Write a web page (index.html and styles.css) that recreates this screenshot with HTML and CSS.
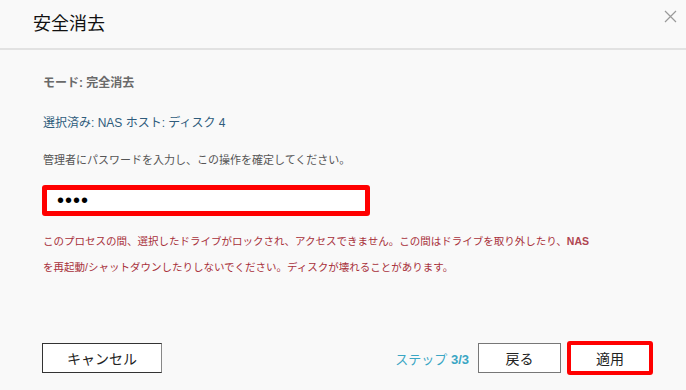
FILE: index.html
```html
<!DOCTYPE html>
<html>
<head>
    <meta charset="UTF-8">
    <title>安全消去</title>
    <link rel="stylesheet" href="styles.css">
</head>
<body>
    <div class="dialog">
        <div class="dialog-header">
            <h1>安全消去</h1>
            <button class="close-btn" aria-label="閉じる">
                <svg width="13" height="13" viewBox="0 0 13 13">
                    <path d="M1 1 L12 12 M12 1 L1 12" stroke="#9a9a9a" stroke-width="1.2" fill="none"/>
                </svg>
            </button>
        </div>

        <div class="dialog-body">
            <p class="mode-text">モード: 完全消去</p>
            <p class="selected-text">選択済み: NAS ホスト: ディスク 4</p>
            <p class="prompt-text">管理者にパスワードを入力し、この操作を確定してください。</p>
            <input type="password" class="password-input" value="abcd" autofocus>
            <p class="warning-text">このプロセスの間、選択したドライブがロックされ、アクセスできません。この間はドライブを取り外したり、<b>NAS</b><br>を再起動/シャットダウンしたりしないでください。ディスクが壊れることがあります。</p>
        </div>

        <div class="dialog-footer">
            <button class="btn cancel-btn">キャンセル</button>
            <div class="footer-right">
                <span class="step-text">ステップ <b>3/3</b></span>
                <button class="btn back-btn">戻る</button>
                <button class="btn apply-btn">適用</button>
            </div>
        </div>
    </div>
</body>
</html>
```

FILE: styles.css
```css
body {
    margin: 0;
    background-color: #f9f9f9;
    font-family: "Liberation Sans", "Noto Sans CJK JP", sans-serif;
}

.dialog {
    display: flex;
    flex-direction: column;
    width: 686px;
    height: 390px;
}

.dialog-header {
    display: flex;
    justify-content: space-between;
    align-items: flex-start;
    height: 48px;
    border-bottom: 2px solid #e2e2e2;
    padding: 0 9px 0 33px;
}

.dialog-header h1 {
    margin: 0;
    font-size: 18px;
    font-weight: normal;
    line-height: 48px;
    color: #111;
}

.close-btn {
    margin-top: 10px;
    padding: 0;
    border: none;
    background: none;
    cursor: pointer;
    line-height: 0;
}

.dialog-body {
    padding: 0 43px;
}

.dialog-body p {
    margin: 0;
    line-height: 20px;
}

.mode-text {
    margin-top: 23px !important;
    font-size: 12px;
    font-weight: bold;
    color: #6a6a6a;
}

.selected-text {
    margin-top: 20px !important;
    font-size: 12px;
    color: #2f5c7c;
}

.prompt-text {
    margin-top: 17px !important;
    font-size: 11px;
    color: #555;
}

.password-input {
    display: block;
    box-sizing: border-box;
    width: 328px;
    height: 31px;
    margin: 15px 0 0 -1px;
    padding: 0 0 0 10px;
    border: 5px solid #f00;
    border-radius: 3px;
    background-color: white;
    font-size: 20px;
    letter-spacing: 1px;
    color: #000;
    outline: none;
    caret-color: #000;
}

.warning-text {
    margin-top: 12px !important;
    font-size: 10.5px;
    line-height: 26px !important;
    color: #a8303a;
    white-space: nowrap;
}

.warning-text b {
    color: #b04550;
}

.dialog-footer {
    display: flex;
    justify-content: space-between;
    align-items: center;
    margin-top: auto;
    padding: 0 33px 15px 42px;
}

.footer-right {
    display: flex;
    align-items: center;
}

.btn {
    box-sizing: border-box;
    height: 30px;
    background-color: white;
    font-family: "Liberation Sans", "Noto Sans CJK JP", sans-serif;
    font-size: 14px;
    color: #222;
    cursor: pointer;
}

.cancel-btn {
    width: 120px;
    border: 1px solid #333;
    border-right-color: #888;
}

.step-text {
    margin-right: 9px;
    font-size: 13px;
    color: #3aa6c4;
}

.back-btn {
    width: 83px;
    border: 1px solid #777;
}

.apply-btn {
    width: 86px;
    height: 34px;
    margin-left: 6px;
    border: 4px solid #f00;
    border-radius: 3px;
}
```
